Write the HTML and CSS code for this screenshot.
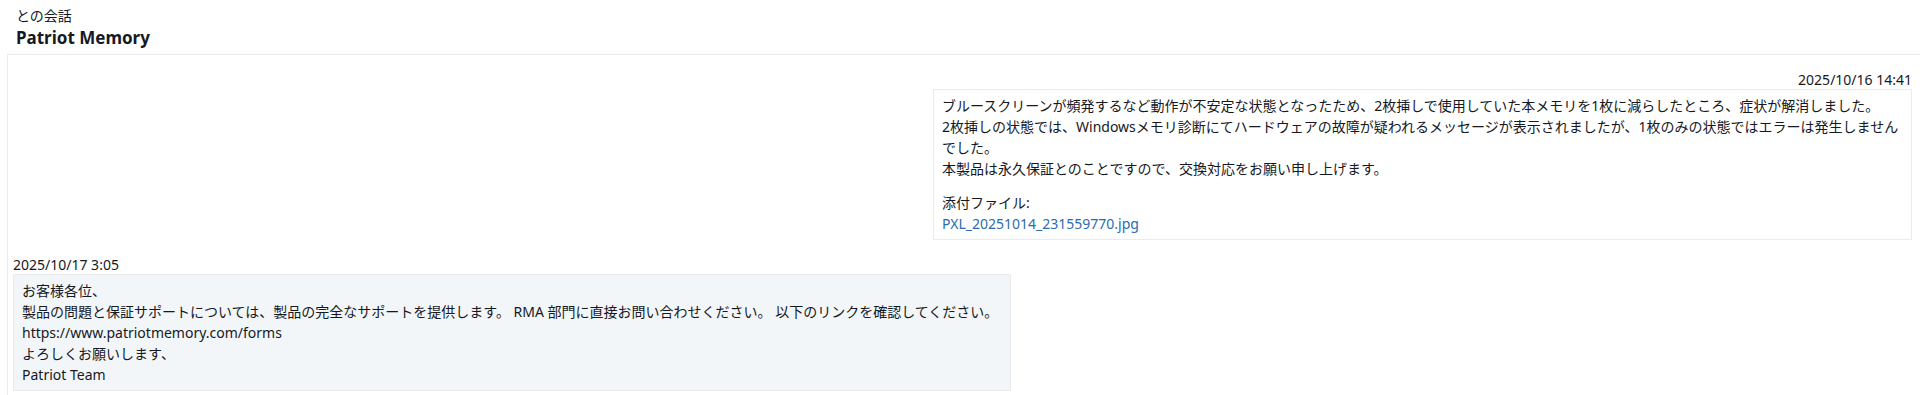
FILE: index.html
```html
<!DOCTYPE html>
<html lang="ja">
<head>
  <meta charset="UTF-8">
  <meta name="viewport" content="width=device-width, initial-scale=1.0">
  <title>Patriot Memory との会話</title>
  <link rel="stylesheet" href="styles.css">
</head>
<body>
  <!-- 見出し -->
  <div class="header">
    <div class="subtitle">との会話</div>
    <h1 class="title">Patriot Memory</h1>
  </div>

  <!-- 会話スレッド -->
  <div class="thread">
    <div class="message sent">
      <div class="time">2025/10/16 14:41</div>
      <div class="bubble">
        <p>ブルースクリーンが頻発するなど動作が不安定な状態となったため、2枚挿しで使用していた本メモリを1枚に減らしたところ、症状が解消しました。<br>
        2枚挿しの状態では、Windowsメモリ診断にてハードウェアの故障が疑われるメッセージが表示されましたが、1枚のみの状態ではエラーは発生しませんでした。<br>
        本製品は永久保証とのことですので、交換対応をお願い申し上げます。</p>
        <p>添付ファイル:<br>
        <a href="#" class="attachment">PXL_20251014_231559770.jpg</a></p>
      </div>
    </div>

    <div class="message received">
      <div class="time">2025/10/17 3:05</div>
      <div class="bubble">
        お客様各位、<br>
        製品の問題と保証サポートについては、製品の完全なサポートを提供します。 RMA 部門に直接お問い合わせください。 以下のリンクを確認してください。<br>
        https://www.patriotmemory.com/forms<br>
        よろしくお願いします、<br>
        Patriot Team
      </div>
    </div>
  </div>
</body>
</html>
```

FILE: styles.css
```css
/* ベース */
* {
  margin: 0;
  padding: 0;
  box-sizing: border-box;
}

body {
  font-family: "Noto Sans", "Noto Sans CJK JP", sans-serif;
  font-size: 14px;
  line-height: 21px;
  color: #16191f;
  background: #fff;
  overflow-x: hidden;
}

/* 見出し */
.header {
  padding: 5px 0 0 16px;
  margin-bottom: 4px;
}

.title {
  font-size: 17px;
  line-height: 24px;
  font-weight: 700;
}

/* スレッドの枠 */
.thread {
  margin-left: 7px;
  border: 1px solid #e9ebed;
  border-right: none;
  padding: 15px 8px 8px 5px;
}

.message {
  display: flex;
  flex-direction: column;
  margin-bottom: 15px;
}

.message .time {
  line-height: 19px;
}

.bubble {
  border: 1px solid #e9ebed;
  padding: 5px 8px 5px;
}

.bubble p + p {
  margin-top: 13px;
}

/* 送信メッセージ（右寄せ） */
.sent {
  align-items: flex-end;
}

.sent .bubble {
  width: 979px;
  padding-right: 2px;
}

/* 受信メッセージ（左寄せ） */
.received {
  align-items: flex-start;
}

.received .bubble {
  background: #f2f6f8;
  width: fit-content;
  padding-right: 12px;
}

.attachment {
  color: #2a6cb3;
  text-decoration: none;
}
```
